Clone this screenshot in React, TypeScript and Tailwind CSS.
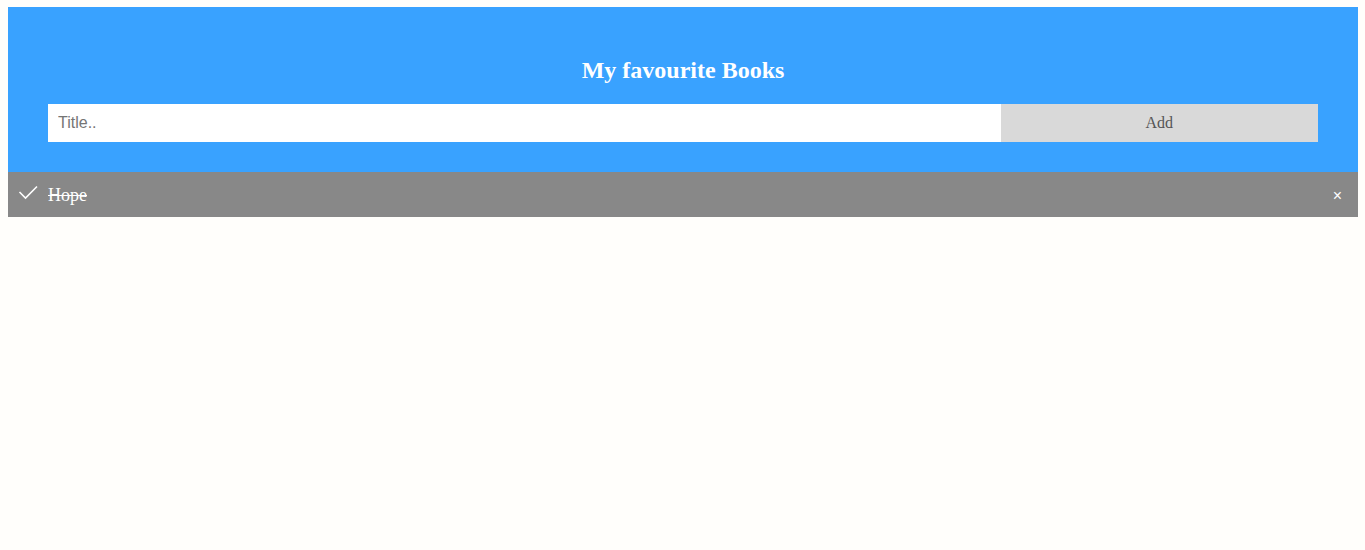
import { useState } from "react";

export default function App() {
  const [items] = useState([{ title: "Hope", done: true }]);

  return (
    <div className="min-h-[550px] bg-[#fffefb] pl-2 pr-[7px] pt-[7px] font-['Liberation_Serif',serif]">
      {/* Header */}
      <div className="bg-[#39a2ff] px-10 py-[30px] text-center text-white">
        <h2 className="my-5 text-2xl font-bold leading-[27px]">My favourite Books</h2>
        <div className="flex">
          <input
            type="text"
            placeholder="Title.."
            className="h-[38px] w-3/4 bg-white px-2.5 font-['Liberation_Sans',sans-serif] text-base text-black outline-none placeholder:text-[#757575]"
          />
          <button className="h-[38px] w-1/4 bg-[#d9d9d9] text-base text-[#555]">Add</button>
        </div>
      </div>

      {/* List */}
      <ul>
        {items.map((item) => (
          <li
            key={item.title}
            className={
              "relative flex h-[45px] items-center pl-10 pr-2 text-lg " +
              (item.done ? "bg-[#888] text-white line-through" : "bg-[#eee] text-black")
            }
          >
            {item.done && (
              <svg
                className="absolute left-[10px] top-[11px]"
                width="20"
                height="18"
                viewBox="0 0 20 18"
                fill="none"
                stroke="#fff"
                strokeWidth="1.6"
              >
                <polyline points="1.5,9 7.5,15 19,3.5" />
              </svg>
            )}
            <span className="mt-[1px]">{item.title}</span>
            <span className="absolute right-[16px] top-[12px] font-['Liberation_Sans',sans-serif] text-base text-white no-underline">
              ×
            </span>
          </li>
        ))}
      </ul>
    </div>
  );
}
